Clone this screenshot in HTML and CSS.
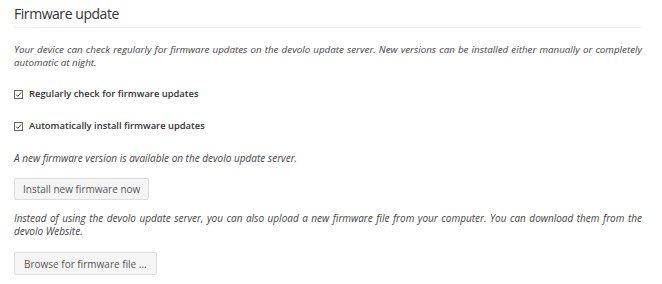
FILE: index.html
```html
<!DOCTYPE html>
<html>
<head>
<meta charset="utf-8">
<link rel="stylesheet" href="styles.css">
</head>
<body>
<div class="page">
  <h2 class="title">Firmware update</h2>
  <p class="note intro">Your device can check regularly for firmware updates on the devolo update server. New versions can be installed either manually or completely automatic at night.</p>
  <label class="check">
    <svg class="box" width="9" height="9" viewBox="0 0 9 9"><rect x="0.5" y="0.5" width="8" height="8" fill="#fff" stroke="#666" stroke-width="1"/><path d="M2 4.6 L3.8 6.4 L7 2.4" fill="none" stroke="#444" stroke-width="1"/></svg>
    <span>Regularly check for firmware updates</span>
  </label>
  <label class="check">
    <svg class="box" width="9" height="9" viewBox="0 0 9 9"><rect x="0.5" y="0.5" width="8" height="8" fill="#fff" stroke="#666" stroke-width="1"/><path d="M2 4.6 L3.8 6.4 L7 2.4" fill="none" stroke="#444" stroke-width="1"/></svg>
    <span>Automatically install firmware updates</span>
  </label>
  <p class="note status">A new firmware version is available on the devolo update server.</p>
  <button class="btn">Install new firmware now</button>
  <p class="note upload">Instead of using the devolo update server, you can also upload a new firmware file from your computer. You can download them from the devolo Website.</p>
  <button class="btn browse">Browse for firmware file ...</button>
</div>
</body>
</html>
```

FILE: styles.css
```css
html, body {
  margin: 0;
  padding: 0;
  background: #fff;
}
.page {
  width: 628px;
  padding: 4px 0 0 14px;
  font-family: "Open Sans", "DejaVu Sans", sans-serif;
  color: #444;
}
.title {
  margin: 0;
  font-size: 14px;
  letter-spacing: -0.45px;
  font-weight: 400;
  line-height: 20px;
  color: #333;
  padding-bottom: 3px;
  border-bottom: 1px solid #f0f0f0;
}
.note {
  font-size: 10px;
  font-style: italic;
  line-height: 13px;
  margin: 15px 0 0 0;
  text-align: justify;
  color: #444;
}
.intro {
  font-size: 9.8px;
}
.check {
  display: flex;
  align-items: center;
  gap: 6px;
  font-size: 9.4px;
  font-weight: 600;
  color: #333;
  line-height: 14px;
  margin-top: 18px;
}
.box {
  display: block;
  flex: none;
}
.status {
  margin-top: 19px;
}
.btn {
  display: block;
  margin-top: 13px;
  font-family: "Open Sans", "DejaVu Sans", sans-serif;
  font-size: 10px;
  color: #555;
  background: #f5f5f5;
  border: 1px solid #ddd;
  border-radius: 2px;
  padding: 0 8px;
  height: 22px;
  line-height: 20px;
}
.upload {
  margin-top: 12px;
}
.browse {
  margin-top: 14px;
  height: 23px;
  padding: 0 9px;
}
```
